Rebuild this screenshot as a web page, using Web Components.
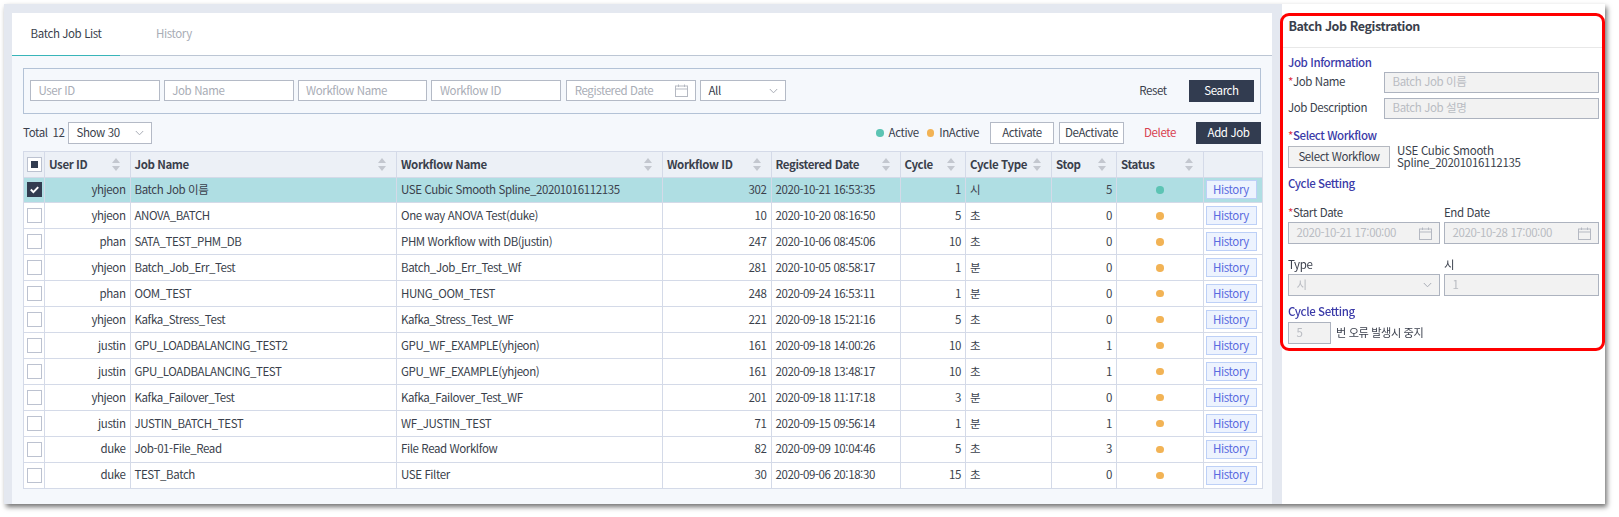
<!DOCTYPE html>
<html lang="ko"><head><meta charset="utf-8"><title>Batch Job</title>
<style>
html,body{margin:0;padding:0;background:#fff;height:517px;overflow:hidden}
body{font:11.5px/1.2 "Noto Sans CJK KR","Noto Sans",sans-serif;letter-spacing:-.4px;color:#3a3f4c;padding:4px 0 0 4px;box-sizing:border-box}
</style></head><body>
<job-app></job-app>
<script>
const calIcon=`<svg width="13" height="13" viewBox="0 0 13 13" fill="none" stroke="#b5b9c2" stroke-width="1"><rect x=".5" y="2" width="12" height="10.5"/><path d="M.5 5h12M3.5 .5v2.5M9.5 .5v2.5"/></svg>`;
const chev=`<svg width="9" height="6" viewBox="0 0 9 6" fill="none" stroke="#a9adb6" stroke-width="1"><path d="M.8 1l3.7 3.8L8.2 1"/></svg>`;
function def(name,css,html,init){
  customElements.define(name,class extends HTMLElement{
    connectedCallback(){
      if(this.shadowRoot)return;
      const r=this.attachShadow({mode:'open'});
      r.innerHTML=`<style>:host{box-sizing:border-box}*{box-sizing:border-box}${css}</style>`+(typeof html==='function'?html(this):html);
      if(init)init(r,this);
    }
  });
}
def('text-input',`
:host{display:flex;align-items:center;height:var(--h,21px);width:var(--w,129.8px);border:1px solid #b4bac6;background:var(--bg,#fff);padding:0 7px 0 7.5px;color:#a9adb6;font-size:11.5px;justify-content:space-between;white-space:nowrap;flex:none}
:host([disabled]){--bg:#f2f2f2;border-color:#adb3bf;color:#b9bcc2}
:host([dark]){color:#3a3f4c}
svg{display:block;flex:none}
`,h=>`<span><slot></slot></span>${h.hasAttribute('cal')?calIcon:''}${h.hasAttribute('sel')?chev:''}`);
def('plain-btn',`
:host{display:inline-flex;align-items:center;justify-content:center;height:22px;width:var(--w,65px);font-size:11.5px;flex:none;white-space:nowrap;border:1px solid #b4bac6;background:#fff;color:#3a3f4c}
:host([kind=dark]){background:#323c50;border-color:#323c50;color:#fff}
:host([kind=text]){border:none;background:none}
:host([kind=del]){border:none;background:none;color:#d8404f}
:host([kind=gray]){background:#f3f3f3;border-color:#b4b8c0;height:22px}
`,`<slot></slot>`);
def('job-tabs',`
:host{display:flex;background:#fff;height:42.5px;border-bottom:1px solid #bcc6d4;font-size:11.5px;flex:none}
div{display:flex;align-items:center;justify-content:center;height:43px;width:108px;padding-bottom:1px}
.on{color:#3a3f4c;border-bottom:1px solid #38b5b9;}
.off{color:#a9adb6;justify-content:flex-start;padding-left:36px;width:120px}
`,`<div class="on">Batch Job List</div><div class="off">History</div>`);
def('job-filter',`
:host{display:flex;align-items:center;height:46.5px;margin:12px 11px 0 11px;border:1px solid #b3c2d6;padding:0 6px 0 6px;gap:4px;background:#f5f8fc}
.sp{flex:1}
`,`<text-input>User ID</text-input><text-input>Job Name</text-input><text-input>Workflow Name</text-input><text-input>Workflow ID</text-input><text-input cal style="margin-left:1px">Registered Date</text-input><text-input sel dark style="--w:86px">All</text-input><span class="sp"></span><plain-btn kind="text" style="--w:60px;margin-right:2px">Reset</plain-btn><plain-btn kind="dark" style="--w:65px">Search</plain-btn>`);
def('job-toolbar',`
:host{display:flex;align-items:center;height:22px;margin:8px 11px 0 11px;font-size:11.5px;white-space:nowrap}
.t{flex:0 0 45px;display:flex;gap:5px}
.sp{flex:1}
i{display:block;width:7.5px;height:7.5px;border-radius:50%;margin-right:5px}
.l{margin-right:8px}
`,`<span class="t"><span>Total</span><span>12</span></span><text-input sel dark style="--w:84px;--h:22px">Show 30</text-input><span class="sp"></span><i style="background:#5cc4b4"></i><span class="l">Active</span><i style="background:#f2b355"></i><span class="l" style="margin-right:11px">InActive</span><plain-btn style="--w:64px;margin-right:5px">Activate</plain-btn><plain-btn style="--w:65px;margin-right:6px">DeActivate</plain-btn><plain-btn kind="del" style="--w:60px;margin-right:6px">Delete</plain-btn><plain-btn kind="dark">Add Job</plain-btn>`);
const cols=[21,85.5,266.5,266,108.5,129,65.5,86,65,86.5,59];
const heads=[['User ID',1],['Job Name',1],['Workflow Name',1],['Workflow ID',1],['Registered Date',1],['Cycle',1],['Cycle Type',1],['Stop',1],['Status',1],['',0]];
const rows=`yhjeon|Batch Job 이름|USE Cubic Smooth Spline_20201016112135|302|2020-10-21 16:53:35|1|시|5|a
yhjeon|ANOVA_BATCH|One way ANOVA Test(duke)|10|2020-10-20 08:16:50|5|초|0|i
phan|SATA_TEST_PHM_DB|PHM Workflow with DB(justin)|247|2020-10-06 08:45:06|10|초|0|i
yhjeon|Batch_Job_Err_Test|Batch_Job_Err_Test_Wf|281|2020-10-05 08:58:17|1|분|0|i
phan|OOM_TEST|HUNG_OOM_TEST|248|2020-09-24 16:53:11|1|분|0|i
yhjeon|Kafka_Stress_Test|Kafka_Stress_Test_WF|221|2020-09-18 15:21:16|5|초|0|i
justin|GPU_LOADBALANCING_TEST2|GPU_WF_EXAMPLE(yhjeon)|161|2020-09-18 14:00:26|10|초|1|i
justin|GPU_LOADBALANCING_TEST|GPU_WF_EXAMPLE(yhjeon)|161|2020-09-18 13:48:17|10|초|1|i
yhjeon|Kafka_Failover_Test|Kafka_Failover_Test_WF|201|2020-09-18 11:17:18|3|분|0|i
justin|JUSTIN_BATCH_TEST|WF_JUSTIN_TEST|71|2020-09-15 09:56:14|1|분|1|i
duke|Job-01-File_Read|File Read Worklfow|82|2020-09-09 10:04:46|5|초|3|i
duke|TEST_Batch|USE Filter|30|2020-09-06 20:18:30|15|초|0|i`.split('\n').map(s=>s.split('|'));
const sort=`<svg width="8" height="13" viewBox="0 0 8 13" fill="#c3c7cf"><path d="M4 0l4 5H0zM0 8h8l-4 5z"/></svg>`;
def('check-box',`
:host{display:block;width:15px;height:15px;border:1px solid #bcc2d0;background:#fff;position:relative}
:host([on]){background:#323c50;border-color:#323c50}
:host([part]) b{display:block;position:absolute;left:3px;top:3px;width:7px;height:7px;background:#323c50}
svg{display:block;position:absolute;left:1px;top:1px}
`,h=>(h.hasAttribute('part')?'<b></b>':'')+(h.hasAttribute('on')?`<svg width="11" height="11" viewBox="0 0 11 11" fill="none" stroke="#fff" stroke-width="2"><path d="M1.8 5.5l2.6 2.6 4.8-5"/></svg>`:''));
def('history-btn',`
:host{display:flex;align-items:center;justify-content:center;width:51px;height:19px;border:1px solid #bdd0f7;background:#edf3fe;color:#5a6be0;font-size:11.5px}
`,`<slot></slot>`);
def('job-table',`
:host{display:block;margin:7px 11px 0 11px}
table{border-collapse:collapse;table-layout:fixed;width:1238px;font-size:11.5px;background:#fff}
th,td{border:1px solid #d4dae8;padding:0 4px 0 4px;white-space:nowrap;overflow:hidden}
th{height:25.5px;background:#ecf0f6;text-align:left;font-weight:700;color:#3a3f4c;padding-top:1px}
td{height:25.95px}
.h{display:flex;align-items:center;justify-content:space-between;padding-right:6px}
.h svg{flex:none}
.r{text-align:right}
th.c,td.c{padding:0 3px}
.sel td{background:#afdee3}
i{display:block;width:7.5px;height:7.5px;border-radius:50%;margin:0 auto}
td.b{padding:0 0 0 2px}
`,()=>`<table><colgroup>${cols.map(c=>`<col style="width:${c}px">`).join('')}</colgroup>
<thead><tr><th class="c"><check-box part></check-box></th>${heads.map(h=>`<th>${h[0]?`<div class="h"><span>${h[0]}</span>${sort}</div>`:''}</th>`).join('')}</tr></thead>
<tbody>${rows.map((r,n)=>`<tr class="${n?'':'sel'}"><td class="c"><check-box ${n?'':'on'}></check-box></td><td class="r">${r[0]}</td><td>${r[1]}</td><td>${r[2]}</td><td class="r">${r[3]}</td><td>${r[4]}</td><td class="r">${r[5]}</td><td>${r[6]}</td><td class="r">${r[7]}</td><td><i style="background:${r[8]=='a'?'#5cc4b4':'#f2b355'}"></i></td><td class="b"><history-btn>History</history-btn></td></tr>`).join('')}</tbody></table>`);
def('job-list',`
:host{display:flex;flex-direction:column;width:1260px;background:#f5f8fc;height:491px}
`,`<job-tabs></job-tabs><job-filter></job-filter><job-toolbar></job-toolbar><job-table></job-table>`);
def('form-label',`
:host{display:block;font-size:11.5px;color:#3a3f4c;white-space:nowrap}
:host([sec]){color:#3a3aa8;font-weight:500}
b{color:#e0313f;font-weight:400}
`,h=>`${h.hasAttribute('req')?'<b>*</b>':''}<slot></slot>`);
def('job-panel',`
:host{display:flex;flex-direction:column;position:relative;width:323px;background:#fff;height:500px;font-size:11.5px}
.title{height:44px;border-bottom:1px solid #e8e8e8;padding:13px 0 0 6.5px;font-weight:700;font-size:12.5px;line-height:18px;color:#3a3f4c;flex:none}
.body{padding:0 6px 0 6px}
.row{display:flex;align-items:center}
.two{display:grid;grid-template-columns:151.5px 155px;column-gap:4.5px;}
.red{position:absolute;left:-2px;top:8.5px;width:325px;height:338.5px;border:3px solid #f00;border-radius:9px;pointer-events:none}
.lab{width:96px}
.wf{line-height:11.5px;color:#3a3f4c;margin-left:7px;white-space:nowrap;letter-spacing:-.28px}
`,`<div class="title">Batch Job Registration</div>
<div class="body">
<form-label sec style="margin:7px 0 0 0;line-height:15px">Job Information</form-label>
<div class="row" style="margin-top:1.5px"><form-label req class="lab">Job Name</form-label><text-input disabled style="--w:215px;--h:21.5px">Batch Job 이름</text-input></div>
<div class="row" style="margin-top:4.5px"><form-label class="lab">Job Description</form-label><text-input disabled style="--w:215px">Batch Job 설명</text-input></div>
<form-label sec req style="margin:9px 0 0 0;line-height:15px">Select Workflow</form-label>
<div class="row" style="margin-top:2.5px"><plain-btn kind="gray" style="--w:102px">Select Workflow</plain-btn><div class="wf">USE Cubic Smooth<br>Spline_20201016112135</div></div>
<form-label sec style="margin:8px 0 0 0;line-height:15px">Cycle Setting</form-label>
<div class="two" style="margin-top:14px;line-height:15px"><form-label req>Start Date</form-label><form-label>End Date</form-label></div>
<div class="two" style="margin-top:2px"><text-input disabled cal style="--w:100%;--h:22px">2020-10-21 17:00:00</text-input><text-input disabled cal style="--w:100%;--h:22px">2020-10-28 17:00:00</text-input></div>
<div class="two" style="margin-top:13px;line-height:15px"><form-label>Type</form-label><form-label>시</form-label></div>
<div class="two" style="margin-top:1.5px"><text-input disabled sel style="--w:100%;--h:22px">시</text-input><text-input disabled style="--w:100%;--h:22px">1</text-input></div>
<form-label sec style="margin:8px 0 0 0;line-height:15px">Cycle Setting</form-label>
<div class="row" style="margin-top:3.5px"><text-input disabled style="--w:43px;--h:22px">5</text-input><span style="margin-left:5px;font-size:11.2px">번 오류 발생시 중지</span></div>
</div><div class="red"></div>`);
def('job-app',`
:host{display:flex;width:1601px;height:500px;background:#e4e8f0;box-shadow:2px 3px 5px rgba(0,0,0,.55);filter:blur(.35px)}
.left{width:1278px;padding:9px 0 0 8px;flex:none}
`,`<div class="left"><job-list></job-list></div><job-panel></job-panel>`);
</script></body></html>
